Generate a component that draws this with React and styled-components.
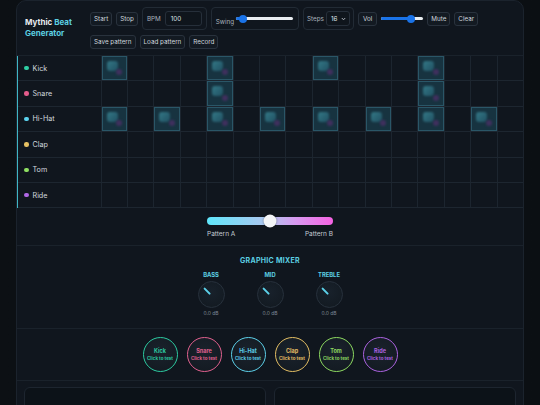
import styled, { createGlobalStyle } from "styled-components";

const GlobalStyle = createGlobalStyle`
  html, body {
    margin: 0;
    padding: 0;
    background: #0b0f14;
    font-family: "Inter", "Noto Sans", sans-serif;
    color: #d6dce2;
  }
  * { box-sizing: border-box; }
`;

const Page = styled.div`
  width: 540px;
  height: 405px;
  overflow: hidden;
  padding: 0 16px;
  background: linear-gradient(90deg, #0c1014 0%, #0b0f13 100%);
`;

const Panel = styled.div`
  background: #10161e;
  border: 1px solid #1b232d;
  border-radius: 10px;
  min-height: 420px;
`;

const Header = styled.div`
  display: flex;
  align-items: center;
  height: 55px;
  padding: 0 8px;
  border-bottom: 1px solid #1a222b;
`;

const Title = styled.h1`
  margin: 0;
  width: 65px;
  font-size: 8px;
  line-height: 11.5px;
  font-weight: 700;
  color: #e8ecf0;
`;

const TitleLine = styled.div`
  white-space: nowrap;
`;

const Accent = styled.span`
  color: #5ccfe2;
`;

const Controls = styled.div`
  display: flex;
  flex-direction: column;
  gap: 5px;
`;

const ControlRow = styled.div`
  display: flex;
  align-items: center;
  gap: 4px;
`;

const Button = styled.button`
  height: 14px;
  padding: 0 ${(p) => p.$px || 3}px;
  font-family: inherit;
  font-size: 6.3px;
  color: #cfd6dd;
  background: #131a22;
  border: 1px solid #29323d;
  border-radius: 3px;
`;

const Group = styled.div`
  display: flex;
  align-items: ${(p) => p.$align || "center"};
  gap: ${(p) => p.$gap || 4}px;
  height: 23px;
  padding: ${(p) => p.$pad || "0 4px"};
  border: 1px solid #222b35;
  border-radius: 4px;
`;

const GroupLabel = styled.span`
  font-size: 6.3px;
  color: #aab3bc;
  align-self: ${(p) => p.$self || "auto"};
  margin-bottom: ${(p) => p.$mb || 0}px;
`;

const Input = styled.div`
  width: 37px;
  height: 15px;
  padding: 0 5px;
  display: flex;
  align-items: center;
  font-size: 6.3px;
  color: #dfe4e9;
  background: #0f151c;
  border: 1px solid #262f3a;
  border-radius: 3px;
`;

const Select = styled(Input)`
  width: 24px;
  padding: 0 3px 0 4px;
  justify-content: space-between;
`;

const Slider = styled.div`
  position: relative;
  width: ${(p) => p.$w}px;
  height: 3px;
  border-radius: 2px;
  align-self: ${(p) => p.$self || "auto"};
  margin-top: ${(p) => p.$mt || 0}px;
  background: #e9edf1;
`;

const SliderFill = styled.div`
  height: 100%;
  border-radius: 2px;
  background: #1a73e8;
`;

const SliderThumb = styled.div`
  position: absolute;
  top: -2.5px;
  width: 8px;
  height: 8px;
  margin-left: -4px;
  border-radius: 50%;
  background: #1a73e8;
`;

const Sequencer = styled.div`
  border-left: 1.5px solid #3fb6c4;
`;

const Row = styled.div`
  display: grid;
  grid-template-columns: 82.5px repeat(16, 1fr);
  height: 25.4px;
  border-bottom: 1px solid #1d2630;
`;

const Label = styled.div`
  display: flex;
  align-items: center;
  gap: 4px;
  padding-left: 6px;
  font-size: 7.2px;
  color: #d2d8de;
`;

const Dot = styled.span`
  width: 4.5px;
  height: 4.5px;
  border-radius: 50%;
  background: ${(p) => p.$color};
`;

const Cell = styled.div`
  position: relative;
  border-left: 1px solid #1c252f;
  background: ${(p) => (p.$on ? "#173340" : "transparent")};
  box-shadow: ${(p) => (p.$on ? "inset 0 0 0 1px #2a5667" : "none")};

  &::before {
    content: "";
    display: ${(p) => (p.$on ? "block" : "none")};
    position: absolute;
    left: 5px;
    top: 5px;
    width: 11px;
    height: 10px;
    border-radius: 3px;
    background: linear-gradient(135deg, #3b8a99 0%, #23586a 100%);
    filter: blur(1px);
    opacity: 0.8;
  }

  &::after {
    content: "";
    display: ${(p) => (p.$on ? "block" : "none")};
    position: absolute;
    right: 5px;
    bottom: 5px;
    width: 6px;
    height: 6px;
    border-radius: 50%;
    background: #40305e;
    filter: blur(1px);
  }
`;

const Section = styled.div`
  display: flex;
  flex-direction: column;
  align-items: center;
  height: ${(p) => p.$h}px;
  padding-top: ${(p) => p.$pt || 0}px;
  border-bottom: 1px solid #1a222b;
`;

const Crossfader = styled.div`
  position: relative;
  width: 126px;
  height: 8px;
  border-radius: 4px;
  background: linear-gradient(90deg, #5fe6fb 0%, #b2c4ee 50%, #d79af0 70%, #f562e2 100%);
`;

const FaderThumb = styled.div`
  position: absolute;
  left: 50%;
  top: 50%;
  width: 13px;
  height: 13px;
  transform: translate(-50%, -50%);
  border-radius: 50%;
  background: #f3f5f7;
  box-shadow: 0 0 2px rgba(0, 0, 0, 0.5);
`;

const FaderLabels = styled.div`
  display: flex;
  justify-content: space-between;
  width: 126px;
  margin-top: 5px;
  font-size: 6.5px;
  color: #c4ccd4;
`;

const MixerTitle = styled.div`
  font-size: 7px;
  font-weight: 700;
  letter-spacing: 0.3px;
  color: #5ccfe2;
`;

const Knobs = styled.div`
  display: flex;
  gap: 32px;
  margin-top: 6px;
`;

const KnobGroup = styled.div`
  display: flex;
  flex-direction: column;
  align-items: center;
  width: 27px;
`;

const KnobLabel = styled.div`
  font-size: 5.8px;
  font-weight: 700;
  color: #5ccfe2;
`;

const Knob = styled.div`
  position: relative;
  width: 27px;
  height: 27px;
  margin-top: 3px;
  border-radius: 50%;
  background: radial-gradient(circle at 50% 40%, #18212b 0%, #121920 100%);
  border: 1px solid #27313c;

  &::after {
    content: "";
    position: absolute;
    left: 50%;
    top: 3px;
    width: 2px;
    height: 9px;
    margin-left: -1px;
    border-radius: 1px;
    background: #5cd2ea;
    transform-origin: 50% 10px;
    transform: rotate(-45deg);
  }
`;

const KnobValue = styled.div`
  margin-top: 2px;
  font-size: 5px;
  color: #7d8893;
`;

const Pads = styled.div`
  display: flex;
  gap: 9px;
`;

const Pad = styled.div`
  width: 35px;
  height: 35px;
  border-radius: 50%;
  border: 1.5px solid ${(p) => p.$color};
  background: radial-gradient(circle at 50% 40%, #1a222c 0%, #121920 100%);
  display: flex;
  flex-direction: column;
  align-items: center;
  justify-content: center;
  color: ${(p) => p.$color};
  font-weight: 700;
`;

const PadName = styled.div`
  font-size: 5.5px;
`;

const PadHint = styled.div`
  margin-top: 2px;
  font-size: 4.5px;
`;

const Bottom = styled.div`
  display: grid;
  grid-template-columns: 1fr 1fr;
  gap: 8px;
  padding: 6px 7px 0;
`;

const Card = styled.div`
  height: 40px;
  background: #0c1218;
  border: 1px solid #1d252f;
  border-radius: 6px;
`;

const tracks = [
  { name: "Kick", color: "#2fcfa4", on: [0, 4, 8, 12] },
  { name: "Snare", color: "#e35c8c", on: [4, 12] },
  { name: "Hi-Hat", color: "#5bd3ef", on: [0, 2, 4, 6, 8, 10, 12, 14] },
  { name: "Clap", color: "#e6c164", on: [] },
  { name: "Tom", color: "#8fe063", on: [] },
  { name: "Ride", color: "#b067e6", on: [] },
];

const padColors = {
  Kick: "#2cc9a0",
  Snare: "#e0608e",
  "Hi-Hat": "#5ccfe8",
  Clap: "#e2bd63",
  Tom: "#8cd860",
  Ride: "#ab62e0",
};

const RangeSlider = ({ w, value, self, mt }) => (
  <Slider $w={w} $self={self} $mt={mt}>
    <SliderFill style={{ width: `${value}%` }} />
    <SliderThumb style={{ left: `${value}%` }} />
  </Slider>
);

export default function App() {
  return (
    <Page>
      <GlobalStyle />
      <Panel>
        <Header>
          <Title>
            <TitleLine>
              Mythic <Accent>Beat</Accent>
            </TitleLine>
            <TitleLine>
              <Accent>Generator</Accent>
            </TitleLine>
          </Title>
          <Controls>
            <ControlRow>
              <Button>Start</Button>
              <Button>Stop</Button>
              <Group>
                <GroupLabel>BPM</GroupLabel>
                <Input>100</Input>
              </Group>
              <Group $align="stretch" $pad="0 5px 0 4px" $gap={2}>
                <GroupLabel $self="flex-end" $mb={3}>
                  Swing
                </GroupLabel>
                <RangeSlider w={57} value={12} self="flex-start" mt={9} />
              </Group>
              <Group $gap={2} $pad="0 3px">
                <GroupLabel>Steps</GroupLabel>
                <Select>
                  16
                  <svg width="5" height="4" viewBox="0 0 5 4">
                    <path d="M0.8 1 L2.5 2.8 L4.2 1" stroke="#cfd6dd" strokeWidth="0.8" fill="none" />
                  </svg>
                </Select>
              </Group>
              <Button $px={4}>Vol</Button>
              <RangeSlider w={42} value={70} />
              <Button>Mute</Button>
              <Button>Clear</Button>
            </ControlRow>
            <ControlRow>
              <Button>Save pattern</Button>
              <Button>Load pattern</Button>
              <Button>Record</Button>
            </ControlRow>
          </Controls>
        </Header>

        <Sequencer>
          {tracks.map((t) => (
            <Row key={t.name}>
              <Label>
                <Dot $color={t.color} />
                {t.name}
              </Label>
              {Array.from({ length: 16 }, (_, i) => (
                <Cell key={i} $on={t.on.includes(i)} />
              ))}
            </Row>
          ))}
        </Sequencer>

        <Section $h={38} $pt={9}>
          <Crossfader>
            <FaderThumb />
          </Crossfader>
          <FaderLabels>
            <span>Pattern A</span>
            <span>Pattern B</span>
          </FaderLabels>
        </Section>

        <Section $h={83} $pt={10}>
          <MixerTitle>GRAPHIC MIXER</MixerTitle>
          <Knobs>
            {["BASS", "MID", "TREBLE"].map((k) => (
              <KnobGroup key={k}>
                <KnobLabel>{k}</KnobLabel>
                <Knob />
                <KnobValue>0.0 dB</KnobValue>
              </KnobGroup>
            ))}
          </Knobs>
        </Section>

        <Section $h={52} $pt={8}>
          <Pads>
            {tracks.map((t) => (
              <Pad key={t.name} $color={padColors[t.name]}>
                <PadName>{t.name}</PadName>
                <PadHint>Click to test</PadHint>
              </Pad>
            ))}
          </Pads>
        </Section>

        <Bottom>
          <Card />
          <Card />
        </Bottom>
      </Panel>
    </Page>
  );
}
